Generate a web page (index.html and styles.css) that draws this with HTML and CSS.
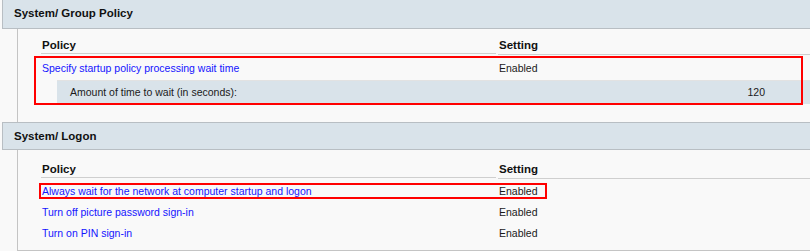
FILE: index.html
```html
<!DOCTYPE html>
<html lang="en">
<head>
    <meta charset="UTF-8">
    <meta name="viewport" content="width=device-width, initial-scale=1.0">
    <title>Group Policy Results</title>
    <link rel="stylesheet" href="styles.css">
</head>
<body>
    <div class="section first">
        <div class="section-title">System/ Group Policy</div>
        <div class="section-body">
            <div class="policy-head">
                <div class="col-policy">Policy</div>
                <div class="col-setting">Setting</div>
            </div>
            <div class="policy-list">
                <div class="policy-row tall">
                    <a class="col-policy" href="#">Specify startup policy processing wait time</a>
                    <div class="col-setting">Enabled</div>
                </div>
                <div class="policy-sub">
                    <span>Amount of time to wait (in seconds):</span>
                    <span>120</span>
                </div>
                <!-- red frame around the changed setting -->
                <div class="mark mark-wait"></div>
            </div>
        </div>
    </div>

    <div class="section">
        <div class="section-title">System/ Logon</div>
        <div class="section-body">
            <div class="policy-head">
                <div class="col-policy">Policy</div>
                <div class="col-setting">Setting</div>
            </div>
            <div class="policy-list">
                <div class="policy-row">
                    <a class="col-policy" href="#">Always wait for the network at computer startup and logon</a>
                    <div class="col-setting">Enabled</div>
                </div>
                <div class="policy-row">
                    <a class="col-policy" href="#">Turn off picture password sign-in</a>
                    <div class="col-setting">Enabled</div>
                </div>
                <div class="policy-row">
                    <a class="col-policy" href="#">Turn on PIN sign-in</a>
                    <div class="col-setting">Enabled</div>
                </div>
                <div class="mark mark-network"></div>
            </div>
        </div>
    </div>
</body>
</html>
```

FILE: styles.css
```css
body {
    margin: 0;
    padding: 0;
    width: 810px;
    overflow: hidden;
    background-color: #f9f9f9;
    font-family: "Liberation Sans", Arial, sans-serif;
    font-size: 10.5px;
    color: #1a1a1a;
}
.section-title {
    margin-left: 2px;
    height: 26px;
    line-height: 26px;
    padding-left: 11px;
    background-color: #d9e3ea;
    border: 1px solid #b8bec3;
    border-right: none;
    font-weight: bold;
    font-size: 11.5px;
    color: #111;
}
.first .section-title {
    border-top: none;
    height: 28px;
    line-height: 26px;
}
.section-body {
    margin-left: 17px;
    border-left: 1px solid #c4c4c4;
    padding: 7px 0 18px 23px;
}
.section:last-child .section-body {
    padding-top: 10px;
    padding-bottom: 6px;
    border-bottom: 1px solid #c4c4c4;
}
.policy-head {
    display: flex;
    gap: 2px;
    font-weight: bold;
    font-size: 11.5px;
    color: #111;
}
.policy-head > div {
    height: 18px;
    line-height: 18px;
    border-bottom: 1px solid #cfcfcf;
}
.col-policy {
    width: 455px;
    padding-left: 1px;
    box-sizing: border-box;
}
.col-setting {
    flex: 1;
    padding-left: 1px;
}
.policy-list {
    position: relative;
    padding-top: 2px;
}
.policy-row {
    display: flex;
    gap: 2px;
    height: 21px;
    line-height: 21px;
}
.policy-row.tall {
    height: 23px;
    line-height: 23px;
}
.policy-row a {
    color: #1414ff;
    text-decoration: none;
}
.policy-sub {
    display: flex;
    justify-content: space-between;
    margin-left: 16px;
    height: 23px;
    line-height: 23px;
    padding: 0 45px 0 13px;
    background-color: #d9e3ea;
    border-top: 1px solid #e2e2e2;
}
.mark {
    position: absolute;
    border: 2px solid #ff0000;
}
.mark-wait {
    left: -7px;
    top: 1px;
    width: 765px;
    height: 45px;
}
.mark-network {
    left: -2px;
    top: 4px;
    width: 504px;
    height: 12px;
}
```
